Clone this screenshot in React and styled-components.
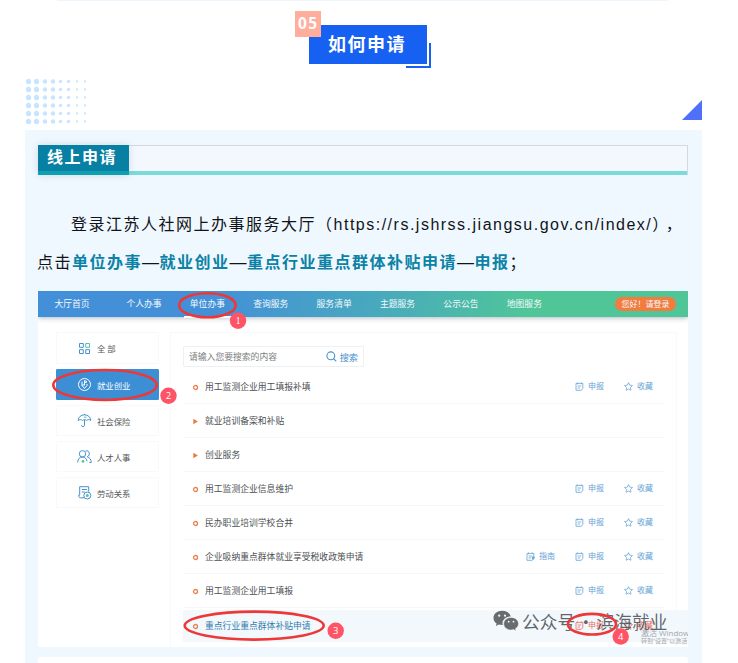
import React from 'react';
import styled, { createGlobalStyle } from 'styled-components';

const GlobalStyle = createGlobalStyle`
  *, *::after {
    box-sizing: border-box;
  }
  body {
    margin: 0;
    background: #fff;
    overflow: hidden;
    font-family: 'Liberation Sans', 'Noto Sans CJK SC', sans-serif;
  }
`;

const Article = styled.div`
  width: 738px;
  height: 663px;
  overflow: hidden;
  padding: 0 36px 0 25px;
`;

const PreviousCard = styled.div`
  height: 1px;
  margin: 0 34px 0 32px;
  background: #edf5fd;
`;

const Heading = styled.div`
  position: relative;
  width: 118px;
  height: 39px;
  margin: 24px 0 0 284px;
  background: #1661f1;
  color: #fff;
  font: bold 18px/36px 'Noto Sans CJK SC', sans-serif;
  letter-spacing: 1.5px;
  padding-left: 19px;
  white-space: nowrap;

  &::after {
    content: '';
    position: absolute;
    right: -4px;
    bottom: -4px;
    width: 25px;
    height: 25px;
    border: solid #1661f1;
    border-width: 0 2px 2px 0;
  }
`;

const HeadingNumber = styled.span`
  position: absolute;
  left: -14px;
  top: -14px;
  width: 26px;
  height: 26px;
  background: #ffad9d;
  font: bold 15.5px/25px 'Open Sans', sans-serif;
  letter-spacing: 1.5px;
  padding-left: 3px;
`;

const Decoration = styled.div`
  display: flex;
  justify-content: space-between;
  align-items: flex-start;
  height: 51px;
  margin-top: 15px;
`;

const Triangle = styled.div`
  width: 20px;
  height: 20px;
  margin-top: 21px;
  background: #4f70fb;
  clip-path: polygon(100% 0, 100% 100%, 0 100%);
`;

const Panel = styled.section`
  height: 540px;
  padding: 15px 14px 0 13px;
  background: #f0f8ff;
`;

const SectionBar = styled.div`
  height: 30px;
  border: solid #d3d9de;
  border-width: 1px 1px 0 0;
  background: linear-gradient(#f2f8fd 25px, #7bdbdb 25px);
  display: flex;
`;

const SectionTitle = styled.div`
  width: 91px;
  height: 30px;
  margin-top: -1px;
  background: linear-gradient(#0880a3 26px, #0ca0b1 26px);
  box-shadow: 0 0 8px rgba(0, 0, 0, 0.12);
  color: #fff;
  font: bold 16px/23px 'Noto Sans CJK SC', sans-serif;
  letter-spacing: 1.5px;
  padding-left: 9px;
  white-space: nowrap;
`;

const Paragraph = styled.div`
  height: 74px;
  margin: 30px -14px 12px -1px;
  font-size: 16px;
  line-height: 37px;
  letter-spacing: 1.5px;
  color: #101418;
  white-space: nowrap;
  text-spacing-trim: space-all;

  div:first-child {
    padding-left: 34px;
  }
  span {
    font-family: 'Noto Sans CJK SC', sans-serif;
  }
  strong {
    color: #0b82a6;
  }
`;

const Closing = styled.span`
  letter-spacing: -2.5px;
`;

const Dash = styled.i`
  display: inline-block;
  width: 17.5px;
  font: 17px/36px 'Liberation Sans', sans-serif;
  letter-spacing: 0;
`;

const Shot = styled.div`
  position: relative;
  width: 650px;
  height: 356px;
  background: #fff;
  overflow: hidden;
  font-family: 'Noto Sans CJK SC', sans-serif;
  font-size: 8.8px;
  line-height: 12px;
  color: #4c5054;
  white-space: nowrap;
`;

const NavBar = styled.nav`
  display: flex;
  align-items: center;
  height: 26px;
  padding: 0 12px 0 16.4px;
  background: linear-gradient(95deg, #4490d8 0%, #4490d8 27%, #48a9bd 52%, #50c698 76%, #50c698 100%);
  box-shadow: 0 1px 5px rgba(60, 80, 100, 0.4);
  color: #f3f9fd;
`;

const NavItem = styled.span`
  position: relative;
  width: ${props => props.$width || 63.4}px;
  ${props => props.$active && `
    &::after {
      content: '';
      position: absolute;
      left: -6px;
      top: 18px;
      width: 48px;
      height: 2px;
      background: #fff;
    }
  `}
`;

const Login = styled.span`
  width: 61px;
  height: 14px;
  margin-left: auto;
  border-radius: 7px;
  background: #f27b3d;
  font-size: 8px;
  line-height: 14px;
  text-align: center;
`;

const Main = styled.div`
  display: flex;
  padding: 15px 11px 0 18px;
`;

const Sidebar = styled.div`
  display: flex;
  flex-direction: column;
  flex-shrink: 0;
  gap: 5px;
  width: 103px;
  margin-right: 11px;
`;

const Category = styled.div`
  display: flex;
  align-items: center;
  gap: 5px;
  height: 31px;
  padding-left: 20px;
  border: 1px solid ${props => (props.$active ? '#3d8fd5' : '#f8f9fa')};
  border-radius: 1px;
  background: ${props => (props.$active ? '#3d8fd5' : '#fff')};
  color: ${props => (props.$active ? '#f4f9ff' : '#55595d')};
  font-size: 8.4px;
  &:first-child {
    height: 32px;
  }
`;

const Content = styled.div`
  flex: 1;
  min-width: 0;
  height: 330px;
  border: 1px solid #f8f9fa;
  padding: 13px 0 0 12px;
`;

const Search = styled.div`
  display: flex;
  align-items: center;
  width: 181px;
  height: 21px;
  padding: 0 5px;
  border: 1px solid #eff0f1;
  border-radius: 1px;
  color: #7b7e81;
  svg {
    margin: 0 3px 0 auto;
  }
  span:last-child {
    color: #488fd0;
    font-size: 9.2px;
  }
`;

const Row = styled.div`
  display: flex;
  align-items: center;
  height: 34px;
  width: ${props => (props.$active ? 506 : 481)}px;
  padding: 1px ${props => (props.$active ? 36 : 11)}px 0 9px;
  border-bottom: 1px solid #f5f6f7;
  color: ${props => (props.$active ? '#327bb1' : '#4c5054')};
  ${props => props.$active && `
    height: 32px;
    margin-top: 2px;
    background: #f2f8fc;
  `}
  &:nth-child(2) {
    margin-top: 3px;
  }
`;

const Marker = styled.svg`
  width: 7px;
  height: 7px;
  margin-right: 6px;
`;

const Actions = styled.div`
  display: flex;
  gap: 20px;
  margin-left: auto;
  padding-bottom: 2px;
`;

const Action = styled.span`
  display: flex;
  align-items: center;
  gap: 4px;
  color: ${props => (props.$red ? '#ec6b65' : '#65a3d5')};
  font-size: 8px;
`;

const Overlay = styled.svg`
  position: absolute;
  left: 0;
  top: 0;
`;

const Watermark = styled.div`
  position: absolute;
  left: 455px;
  top: 316px;
  display: flex;
  align-items: center;
  height: 27px;
  color: rgba(64, 68, 72, 0.82);
  font-size: 17.7px;
  svg {
    margin-right: 3px;
  }
`;

const Dot = styled.span`
  width: 21.5px;
  text-align: center;
`;

const Activate = styled.div`
  position: absolute;
  left: 603px;
  top: 336px;
  color: #a4a7aa;
  font-family: 'Open Sans', 'Noto Sans CJK SC', sans-serif;
  font-size: 8px;
  line-height: 11px;
  small {
    display: block;
    font-size: 6px;
    line-height: 7px;
  }
`;

const NextShot = styled.div`
  height: 20px;
  margin-top: 10px;
  border-radius: 3px 3px 0 0;
  background: #fff;
`;

const columns = [
  [3.5, 2.7], [11.5, 2.7], [20, 2.2], [28, 2.2], [35.5, 1.7], [43.5, 1.7], [52, 1.15], [60, 1.15],
];

const categories = [
  ['all', '全 部'],
  ['job', '就业创业'],
  ['insurance', '社会保险'],
  ['people', '人才人事'],
  ['labor', '劳动关系'],
];

const rows = [
  { text: '用工监测企业用工填报补填', actions: true },
  { text: '就业培训备案和补贴', group: true },
  { text: '创业服务', group: true },
  { text: '用工监测企业信息维护', actions: true },
  { text: '民办职业培训学校合并', actions: true },
  { text: '企业吸纳重点群体就业享受税收政策申请', actions: true, guide: true },
  { text: '用工监测企业用工填报', actions: true },
  { text: '重点行业重点群体补贴申请', actions: true, active: true },
];

const marks = [
  { cx: 169.4, cy: 14.3, rx: 28.3, ry: 12, x: 200, y: 29.7 },
  { cx: 67, cy: 94, rx: 51.7, ry: 15, x: 130.5, y: 104.7 },
  { cx: 216.2, cy: 334.6, rx: 69.5, ry: 14, x: 297.7, y: 339.7 },
  { cx: 554, cy: 333.2, rx: 24, ry: 10.3, x: 582.7, y: 345.5 },
];

const CategoryIcon = ({ kind }) => (
  <svg width="15" height="15" viewBox="0 0 15 15" fill="none" stroke={kind === 'job' ? '#fff' : '#4791cf'} strokeWidth="1">
    {kind === 'all' && (
      <g>
        <path d="M2.5 2.5h3.8v3.8H2.5zM2.5 8.7h3.8v3.8H2.5zM8.7 8.7h3.8v3.8H8.7z" />
        <path d="M8.7 2.5h3.8v3.8H8.7z" stroke="#55c3a5" />
      </g>
    )}
    {kind === 'job' && (
      <g>
        <circle cx="7.5" cy="7.5" r="6" />
        <path d="M5 4.5v4l2.5 3 2.5-3V7M7.5 3.5v5M7.5 3.5l2.5 1.3-2.5 1.2M5 8.5l2.5-1" />
      </g>
    )}
    {kind === 'insurance' && (
      <g>
        <path d="M1.2 7.5a6.2 5.6 0 0 1 12.6 0c-1.4-1.2-2.8-1.2-4 0-1.4-1.2-3-1.2-4.4 0-1.2-1.2-2.8-1.2-4.2 0zM7.5 1v1M7.5 7v5.3c0 1.9-3 1.9-3 0" />
        <path d="M7 4.2h2.5" stroke="#55c3a5" />
      </g>
    )}
    {kind === 'people' && (
      <g>
        <circle cx="5.5" cy="4.8" r="3.2" />
        <path d="M.7 13.5c0-3.3 1.7-5.5 4.8-5.5 2.4 0 4 1.6 4.5 4.2M8.6 1.9c4.2-1 5 4.3 1.7 5.9 2.3.7 3.8 2.5 4 5.7h-2" />
        <circle cx="6" cy="12.4" r="1.3" fill="#55c3a5" stroke="none" />
      </g>
    )}
    {kind === 'labor' && (
      <g>
        <path d="M7 12.8H3.5c-1.5 0-1.8-1.5-1.8-2.5h1V1.7h9v5M4.8 4.5h5M4.8 7h3" />
        <circle cx="10.3" cy="10.5" r="3.5" />
        <circle cx="10.3" cy="10.5" r="1.5" fill="#55c3a5" stroke="none" />
      </g>
    )}
  </svg>
);

const FormIcon = ({ guide }) => (
  <svg width="9" height="9" viewBox="0 0 9 9" fill="none" stroke="currentColor" strokeWidth=".8">
    <path d="M1 1.4h6.8v5L6.3 8.3H1zM2.5.5v1.7M6.3.5v1.7M2.6 4h3.6M2.6 6h2.4" />
    {guide && <path d="M6 5h2.5L7 7.5z" fill="currentColor" />}
  </svg>
);

const StarIcon = () => (
  <svg width="9" height="9" viewBox="0 0 9 9" fill="none" stroke="currentColor" strokeWidth=".75" strokeLinejoin="round">
    <path d="M4.5.6l1.2 2.5 2.8.4-2 2 .4 2.8-2.4-1.3-2.4 1.3.4-2.8-2-2 2.8-.4z" />
  </svg>
);

const WechatIcon = () => (
  <svg width="26" height="22" viewBox="0 0 26 22">
    <path fill="#686c6f" d="M9 .8C4.3.8.5 3.9.5 7.9c0 2.3 1.2 4.2 3.1 5.5l-.7 2.6 3-1.5c1 .3 2.1.5 3.2.5h.6c-1.2-4.7 2.7-8.6 8-8.6C17 3.2 13.4.8 9 .8z" />
    <path fill="#686c6f" stroke="#f2f8fc" strokeWidth=".5" d="M25.5 13.7c0-3.5-3.4-6.3-7.4-6.3s-7.4 2.8-7.4 6.3 3.3 6.3 7.4 6.3c.8 0 1.7-.1 2.5-.4l2.5 1.4-.7-2.3c1.9-1.2 3.1-3 3.1-5z" />
    <g fill="#f4f7f9">
      <circle cx="6.2" cy="5.7" r="1.1" />
      <circle cx="12" cy="5.7" r="1.1" />
      <circle cx="15.7" cy="11.7" r=".9" />
      <circle cx="20.5" cy="11.7" r=".9" />
    </g>
  </svg>
);

const Portal = () => (
  <Shot>
    <NavBar>
      <NavItem $width={72}>大厅首页</NavItem>
      <NavItem>个人办事</NavItem>
      <NavItem $active>单位办事</NavItem>
      <NavItem>查询服务</NavItem>
      <NavItem>服务清单</NavItem>
      <NavItem>主题服务</NavItem>
      <NavItem>公示公告</NavItem>
      <NavItem>地图服务</NavItem>
      <Login>您好！请登录</Login>
    </NavBar>
    <Main>
      <Sidebar>
        {categories.map(([kind, label]) => (
          <Category key={kind} $active={kind === 'job'}>
            <CategoryIcon kind={kind} />
            {label}
          </Category>
        ))}
      </Sidebar>
      <Content>
        <Search>
          <span>请输入您要搜索的内容</span>
          <svg width="11" height="11" viewBox="0 0 11 11" fill="none" stroke="#4791d2" strokeWidth="1.1">
            <circle cx="4.8" cy="4.8" r="3.9" />
            <path d="M7.6 7.6l2.7 2.7" />
          </svg>
          <span>搜索</span>
        </Search>
        {rows.map(row => (
          <Row key={row.text} $active={row.active}>
            <Marker viewBox="0 0 7 7">
              {row.group
                ? <path d="M1.3.8v5.4l4.6-2.7z" fill="#ec7a3c" />
                : <circle cx="3.5" cy="3.5" r="2" fill="none" stroke="#e68350" strokeWidth="1.3" />}
            </Marker>
            {row.text}
            {row.actions && (
              <Actions>
                {row.guide && <Action><FormIcon guide />指南</Action>}
                <Action $red={row.active}><FormIcon />申报</Action>
                <Action $red={row.active}><StarIcon />收藏</Action>
              </Actions>
            )}
          </Row>
        ))}
      </Content>
    </Main>
    <Activate>
      激活 Windows
      <small>转到“设置”以激活 Windows</small>
    </Activate>
    <Watermark>
      <WechatIcon />
      公众号
      <Dot>·</Dot>
      滨海就业
    </Watermark>
    <Overlay width="650" height="356">
      {marks.map((m, i) => (
        <g key={i}>
          <ellipse cx={m.cx} cy={m.cy} rx={m.rx} ry={m.ry} fill="none" stroke="#ed3838" strokeWidth="2.6" />
          <circle cx={m.x} cy={m.y} r="8.2" fill="#ff5366" />
          <text x={m.x} y={m.y + 3.3} fill="#fff" fontSize="9.5" textAnchor="middle" fontFamily={i ? 'Open Sans' : 'Liberation Serif'}>{i + 1}</text>
        </g>
      ))}
    </Overlay>
  </Shot>
);

const App = () => (
  <Article>
    <GlobalStyle />
    <PreviousCard />
    <Heading>
      <HeadingNumber>05</HeadingNumber>
      如何申请
    </Heading>
    <Decoration>
      <svg width="64" height="46" fill="#c8e5ff">
        {[0, 1, 2, 3, 4, 5].map(r => columns.map(([x, size]) => (
          <circle key={`${r}-${x}`} cx={x} cy={2.5 + r * 8} r={size} />
        )))}
      </svg>
      <Triangle />
    </Decoration>
    <Panel>
      <SectionBar>
        <SectionTitle>线上申请</SectionTitle>
      </SectionBar>
      <Paragraph>
        <div>
          登录江苏人社网上办事服务大厅<span>（</span>https://rs.jshrss.jiangsu.gov.cn/index/<Closing>）</Closing><span>，</span>
        </div>
        <div>
          点击<strong>单位办事</strong><Dash>—</Dash><strong>就业创业</strong><Dash>—</Dash>
          <strong>重点行业重点群体补贴申请</strong><Dash>—</Dash><strong>申报</strong><span>；</span>
        </div>
      </Paragraph>
      <Portal />
      <NextShot />
    </Panel>
  </Article>
);

export default App;
